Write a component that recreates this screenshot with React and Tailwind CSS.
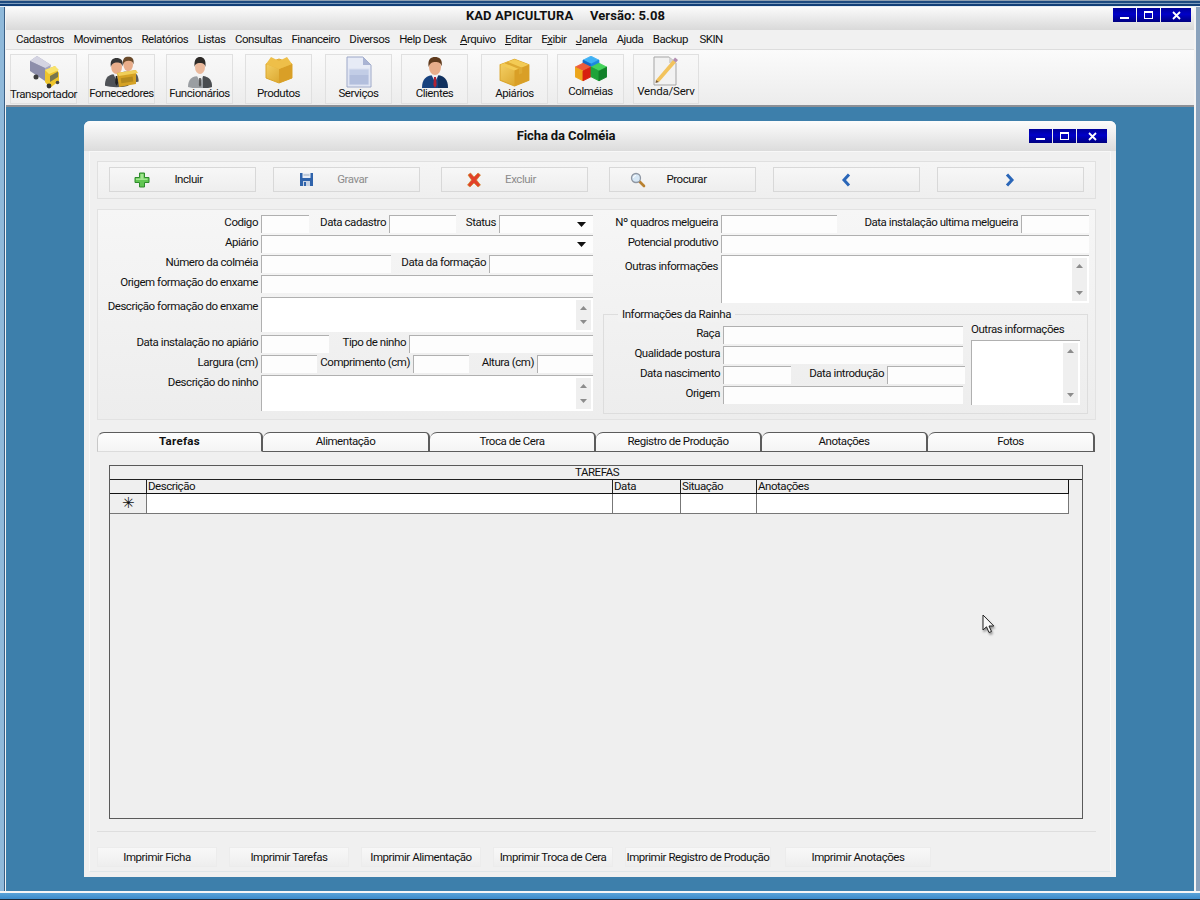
import React from "react";

const Cube = ({ x, y, s, top, left, right }) => (
  <g transform={`translate(${x} ${y}) scale(${s})`}>
    <polygon points="0,-10 9,-5.5 0,-1 -9,-5.5" fill={top} stroke={top} strokeWidth="1" strokeLinejoin="round" />
    <polygon points="-9,-5.5 0,-1 0,10 -9,5.5" fill={left} stroke={left} strokeWidth="1" strokeLinejoin="round" />
    <polygon points="9,-5.5 0,-1 0,10 9,5.5" fill={right} stroke={right} strokeWidth="1" strokeLinejoin="round" />
  </g>
);

const Truck = () => (
  <svg width="32" height="33" viewBox="0 0 32 33">
    <polygon points="9,0 23,9 20,21 2,13 2,5" fill="#a8a8c0" />
    <polygon points="9,0 23,9 17,12 2,5" fill="#d4d4e2" />
    <polygon points="2,5 17,12 17,25 2,15" fill="#8d8eab" />
    <polygon points="17,14 27,10 31,17 31,25 22,32 17,26" fill="#eec52c" />
    <polygon points="17,14 21,18 31,14 27,10" fill="#f8e36c" />
    <polygon points="22,20 30,15.500 30,21 22,26" fill="#77764f" />
    <circle cx="8" cy="21" r="2.500" fill="#3c3c3c" />
    <circle cx="21" cy="30" r="2.400" fill="#333" />
    <circle cx="29.500" cy="26.500" r="1.800" fill="#444" />
  </svg>
);

const Person = ({ suit, hair, tie, shirt = "#eef0f4" }) => (
  <>
    <path d="M1 32c0-9 4-13 13-13s13 4 13 13c-6 2-20 2-26 0z" fill={suit} />
    <path d="M17 19c6 1 10 4 10 13-3 1-6 1-10 1z" fill="#000" fillOpacity=".25" />
    <polygon points="10.500,19 14,26 17.500,19" fill={shirt} />
    <polygon points="13,21 15,21 15.600,29 14,32 12.400,29" fill={tie} />
    <ellipse cx="14" cy="11" rx="6" ry="8" fill="#e8ad8a" />
    <path d="M7.600 11C6.500 3 10 1 14 1s8 2 6.600 9.600C20 7 18 6 14.500 6 11 6 9 7 7.600 11z" fill={hair} />
  </>
);

const Suppliers = () => (
  <svg width="34" height="32" viewBox="0 0 34 32">
    <g transform="translate(-1 1) scale(.9)"><Person suit="#4f5257" hair="#353535" tie="#222" /></g>
    <g transform="translate(12 0) scale(.8)"><Person suit="#777a7e" hair="#6a4a2a" tie="#444" /></g>
    <polygon points="12,17 31,14 31,28 14,31" fill="#d5a226" />
    <polygon points="12,17 31,14 33,17 14,20" fill="#f0ce5a" />
    <rect x="16" y="21.500" width="12" height="5" fill="#b48a1f" transform="rotate(-8 21 24)" />
  </svg>
);

const Staff = () => (
  <svg width="28" height="32" viewBox="0 0 28 32">
    <path d="M2 31c0-8 4-11 12-11s12 3 12 11c-6 2-18 2-24 0z" fill="#9a9ea2" />
    <path d="M17 20c6 1 9 4 9 11-3 1-5 1-9 1z" fill="#4a4d50" />
    <polygon points="11,20 14,26 17,20" fill="#f1f1f1" />
    <polygon points="13.200,22 14.800,22 15.200,29 14,31 12.800,29" fill="#555" />
    <ellipse cx="14" cy="11" rx="5" ry="7" fill="#eab99c" />
    <path d="M8.600 11C7.800 3 11 1 14 1s6.400 2 5.400 10c-.6-3-2-4-5.400-4s-4.800 1-5.400 4z" fill="#2d2a27" />
  </svg>
);

const GoldBox = ({ id, w = 28, h = 28, tape }) => (
  <svg width={w} height={h} viewBox="0 0 28 28">
    <defs>
      <linearGradient id={id} x1="0" y1="0" x2="1" y2="1">
        <stop offset="0" stopColor="#f7d46a" />
        <stop offset="1" stopColor="#d39a1e" />
      </linearGradient>
    </defs>
    <path d="M1 8 14 3l13 5v14l-13 5-13-5z" fill={`url(#${id})`} stroke="#dba62c" strokeWidth="1" strokeLinejoin="round" />
    <path d="M1 8l13 5 13-5-13-5z" fill={tape ? "#f3cb55" : "#e6b23e"} />
    <path d="M14 13v14l13-5V8z" fill="#d99f27" />
    {tape ? (
      <path d="M8 5.300 21 10.500v5l-3 1.200v-5L5 6.500z" fill="#deaa33" />
    ) : (
      <path d="M1 8 6 1l8 4 8-4 5 7-13 5z" fill="#eebf49" />
    )}
  </svg>
);

const Doc = () => (
  <svg width="26" height="32" viewBox="0 0 26 32">
    <path d="M1 1h16l8 8v22H1z" fill="#e7ebf6" stroke="#9da8c8" />
    <path d="M17 1v8h8z" fill="#aab4d4" />
    <rect x="3" y="13" width="20" height="6" fill="#c2cde6" />
    <rect x="3" y="19" width="20" height="10" fill="#b3bfdd" />
    <rect x="3" y="13" width="20" height="16" fill="none" stroke="#d9dff0" />
  </svg>
);

const Cubes = () => (
  <svg width="32" height="26" viewBox="0 0 32 26">
    <Cube x={16} y={9} s={.88} top="#3fb0f4" left="#1369c7" right="#1d86df" />
    <Cube x={8} y={16} s={.88} top="#ef5b3a" left="#eca51a" right="#d8200f" />
    <Cube x={24} y={16} s={.88} top="#44d35a" left="#1ea339" right="#11802a" />
  </svg>
);

const PencilDoc = () => (
  <svg width="26" height="30" viewBox="0 0 26 30">
    <path d="M1 1h15l7 6v22H1z" fill="#f2f2f2" stroke="#a5a5a5" />
    <path d="M16 1v6h7z" fill="#d2d2d2" />
    <polygon points="3,24 20,4 23,6.500 6,26" fill="#f2c35d" />
    <polygon points="3,24 6,26 2.500,27" fill="#7b5a30" />
    <polygon points="20,4 22,1.500 25,4 23,6.500" fill="#b28cb0" />
  </svg>
);

const Plus = () => (
  <svg width="16" height="16" viewBox="0 0 16 16">
    <path d="M5.500 1h5v4.500H15v5h-4.500V15h-5v-4.500H1v-5h4.500z" fill="#62c653" stroke="#2f8a2c" strokeLinejoin="round" />
    <path d="M6.500 2h3v4.500h4V8H2V6.500h4.500z" fill="#a2e590" />
  </svg>
);
const Floppy = () => (
  <svg width="15" height="15" viewBox="0 0 15 15">
    <path d="M1 1h13v13H1z" fill="#2f63ab" />
    <rect x="3.500" y="1" width="8" height="5" fill="#e9edf5" />
    <rect x="4.500" y="2.500" width="6" height="1" fill="#99aabb" />
    <rect x="4" y="9" width="7" height="5" fill="#c7d2e4" />
    <rect x="5" y="10" width="2" height="4" fill="#2f63ab" />
  </svg>
);
const RedX = () => (
  <svg width="16" height="16" viewBox="0 0 16 16">
    <path d="M2 3 4.500 1 8 5l4-4 2.500 2-4 5 4 5-2.500 2L8 11l-4 4-2.500-2 4-5z" fill="#e2412a" stroke="#c9871f" strokeWidth=".6" />
  </svg>
);
const Search = () => (
  <svg width="16" height="16" viewBox="0 0 16 16">
    <path d="M9.500 9.500 14 14" stroke="#b9812f" strokeWidth="2.600" strokeLinecap="round" />
    <circle cx="6" cy="6" r="4.500" fill="#d6e7f5" stroke="#8f97a3" strokeWidth="1.300" />
    <path d="M3.500 6A2.500 2.500 0 0 1 6 3.500" stroke="#fff" fill="none" />
  </svg>
);
const Chev = ({ flip }) => (
  <svg width="11" height="14" viewBox="0 0 11 14" className={flip ? "scale-x-[-1]" : ""}>
    <path d="M8 1.500 3 7l5 5.500" fill="none" stroke="#2a66b8" strokeWidth="3" />
  </svg>
);

const WinBtns = () => {
  const cls = "h-[14px] flex items-center justify-center bg-[linear-gradient(#00009a,#0000c8_45%,#000080)]";
  return (
    <div className="flex gap-px">
      <div className={`w-[23px] items-end pb-[3px] ${cls}`}><div className="w-[9px] h-[2px] bg-white" /></div>
      <div className={`w-[23px] ${cls}`}><div className="w-[9px] h-[8px] border border-white border-t-[2px]" /></div>
      <div className={`w-[30px] ${cls}`}>
        <svg width="9" height="9" viewBox="0 0 9 9"><path d="M1 1l7 7M8 1 1 8" stroke="#fff" strokeWidth="1.800" /></svg>
      </div>
    </div>
  );
};

const menu = [
  ["Cadastros"], ["Movimentos"], ["Relatórios"], ["Listas"], ["Consultas"], ["Financeiro"], ["Diversos"], ["Help Desk", "", "", "mr-[4px]"],
  ["", "A", "rquivo"], ["", "E", "ditar"], ["E", "x", "ibir"], ["", "J", "anela"], ["Ajuda"], ["Backup"], ["SKIN", "", "", "ml-[2px]"],
];

const tools = [
  ["Transportador", <Truck />, "w-[67px] ml-[10px]", "mt-0"],
  ["Fornecedores", <Suppliers />, "w-[67px] ml-[11px]", "-mt-[1px]"],
  ["Funcionários", <Staff />, "w-[67px] ml-[11px]", "-mt-[1px]"],
  ["Produtos", <GoldBox id="g1" />, "w-[67px] ml-[12px]", "-mt-[1px]"],
  ["Serviços", <Doc />, "w-[67px] ml-[13px]", "-mt-[1px]"],
  ["Clientes", <svg width="28" height="32" viewBox="0 0 28 32"><Person suit="#17427f" hair="#5f3a1c" tie="#b22234" /></svg>, "w-[67px] ml-[9px]", "-mt-[1px]"],
  ["Apiários", <GoldBox id="g2" w={33} h={31} tape />, "w-[67px] ml-[13px]", "-mt-[1px]"],
  ["Colméias", <Cubes />, "w-[67px] ml-[9px]", "-mt-[3px]"],
  ["Venda/Serv", <PencilDoc />, "w-[66px] ml-[9px]", "-mt-[3px] tracking-[-0.2px]"],
];

const ActionBtn = ({ icon, text, dim, cls, iconCls = "w-[46px]" }) => (
  <button className={`${cls} w-[147px] h-[25px] flex items-center border border-[#d8d8d8] bg-[linear-gradient(#f7f7f7,#eeeeee)] ${dim ? "text-[#8c8c8c]" : "text-[#111]"}`}>
    <span className={`${iconCls} flex justify-end pr-[6px]`}>{icon}</span>
    <span className="flex-1 text-center pr-[34px]">{text}</span>
  </button>
);

const Inp = ({ cls = "flex-1" }) => <div className={`${cls} h-[18px] border-t border-l border-[#b0b0b0] bg-[#fdfdfd]`} />;
const Lab = ({ cls, children }) => <div className={`${cls} shrink-0 text-right leading-[15px] pr-[3px] whitespace-nowrap`}>{children}</div>;

const Arrow = ({ down }) => (
  <svg width="7" height="4" viewBox="0 0 7 4" className={down ? "rotate-180" : ""}><path d="M3.500 0 7 4H0z" fill="#8c8c8c" /></svg>
);
const ScrollBar = () => (
  <div className="w-[15px] flex flex-col items-center justify-between py-[6px] bg-[#efefef] my-[2px] mr-[2px]">
    <Arrow /><Arrow down />
  </div>
);
const Memo = ({ cls }) => (
  <div className={`${cls} flex justify-end border-t border-l border-[#b0b0b0] bg-white`}><ScrollBar /></div>
);
const Combo = ({ cls }) => (
  <div className={`${cls} h-[18px] border-t border-l border-[#b0b0b0] bg-[#fdfdfd] flex justify-end items-center pr-[7px]`}>
    <svg width="9" height="5" viewBox="0 0 9 5"><path d="M0 0h9L4.500 5z" fill="#111" /></svg>
  </div>
);
const Row = ({ cls = "h-[20px]", children }) => <div className={`flex ${cls}`}>{children}</div>;

const tabs = [
  ["Tarefas", "w-[166px]"],
  ["Alimentação", "w-[167px]"],
  ["Troca de Cera", "w-[166px]"],
  ["Registro de Produção", "w-[166px]"],
  ["Anotações", "w-[166px]"],
  ["Fotos", "w-[167px]"],
];
const prints = [
  ["Imprimir Ficha", "w-[120px] ml-0"],
  ["Imprimir Tarefas", "w-[120px] ml-[12px]"],
  ["Imprimir Alimentação", "w-[120px] ml-[12px]"],
  ["Imprimir Troca de Cera", "w-[120px] ml-[12px]"],
  ["Imprimir Registro de Produção", "w-[146px] ml-[12px]"],
  ["Imprimir Anotações", "w-[146px] ml-[14px]"],
];
const cols = [
  ["Descrição", "w-[466px]"],
  ["Data", "w-[68px]"],
  ["Situação", "w-[76px]"],
  ["Anotações", "w-[312px]"],
];

export default function App() {
  return (
    <div className="relative w-[1200px] h-[900px] overflow-hidden flex flex-col bg-[#3d7fab] text-[11.500px] text-[#111] font-['Roboto','Liberation_Sans',sans-serif] tracking-[-0.45px]">
      <div className="h-[7px] shrink-0 bg-[linear-gradient(#8fa0b2_0,#8fa0b2_1px,#1d4a80_1px,#1d4a80_3px,#7f9dbd_3px,#7f9dbd_4px,#123f78_4px,#123f78_6px,#e8eef4_6px)]" />
      <div className="flex-1 flex min-h-0">
        <div className="w-[6px] shrink-0 bg-[linear-gradient(90deg,#8fb9da,#8fb9da_4px,#3a5f85_4px,#3a5f85_5px,#f4f4f4_5px)]" />
        <div className="flex-1 flex flex-col min-w-0">
          <div className="h-[23px] shrink-0 flex bg-[linear-gradient(#fbfbfb,#d9d9d9)]">
            <div className="flex-1 flex justify-center">
              <div className="font-bold text-[13px] tracking-[0.1px] leading-[17px] ml-[12px] whitespace-pre">KAD APICULTURA     Versão: 5.08</div>
            </div>
            <div className="pt-[1px] pr-[3px]"><WinBtns /></div>
          </div>
          <div className="h-[20px] shrink-0 flex gap-[9.500px] pl-[10px] items-center bg-[#f1f1f1] border-b border-[#dddddd] tracking-[-0.5px]">
            {menu.map((m) => (
              <span key={m.join("")} className={`whitespace-nowrap ${m[3] || ""}`}>
                {m[0]}{m[1] && <span className="underline">{m[1]}</span>}{m[2]}
              </span>
            ))}
          </div>
          <div className="h-[57px] shrink-0 flex pt-[4px] bg-[linear-gradient(#fbfbfb,#ececec)] border-b-2 border-[#8d9096]">
            {tools.map(([t, ic, cls, up]) => (
              <div key={t} className={`${cls} -translate-x-[6px] h-[50px] border border-[#e0e0e0] bg-[linear-gradient(#f8f8f8,#efefef)] flex flex-col items-center shrink-0`}>
                <div className="h-[32px] flex items-start justify-center pt-[1px]">{ic}</div>
                <div className={`whitespace-nowrap leading-[14px] ${up}`}>{t}</div>
              </div>
            ))}
          </div>

          <div className="flex-1 min-h-0 pl-[78px] pt-[14px]">
            <div className="w-[1032px] h-[756px] rounded-tl-[6px] rounded-tr-[6px] flex flex-col bg-[#f0f0f0]">
              <div className="h-[30px] shrink-0 rounded-tl-[6px] rounded-tr-[6px] relative flex items-center justify-center pr-[68px] bg-[linear-gradient(#fcfcfc,#dcdcdc)]">
                <span className="font-bold text-[13px] tracking-[-0.1px]">Ficha da Colméia</span>
                <div className="absolute right-[9px] top-[8px]"><WinBtns /></div>
              </div>
              <div className="flex-1 mx-[5px] mb-[5px] pl-[7px] pr-[14px] pt-[9px] border border-[#f8f8f8] border-b-[#dfe6e8] bg-[#f0f0f0] flex flex-col">
                <div className="h-[38px] shrink-0 flex pl-[11px] pt-[5px] border border-[#e0e0e0] bg-[linear-gradient(#f5f5f5,#efefef)]">
                  <ActionBtn icon={<Plus />} text="Incluir" cls="" />
                  <ActionBtn icon={<Floppy />} text="Gravar" dim cls="ml-[17px]" />
                  <ActionBtn icon={<RedX />} text="Excluir" dim cls="ml-[21px]" />
                  <ActionBtn icon={<Search />} text="Procurar" cls="ml-[21px]" iconCls="w-[42px]" />
                  <button className="ml-[17px] w-[147px] h-[25px] flex items-center justify-center border border-[#d8d8d8] bg-[linear-gradient(#f7f7f7,#eeeeee)]"><Chev /></button>
                  <button className="ml-[17px] w-[147px] h-[25px] flex items-center justify-center pr-[2px] border border-[#d8d8d8] bg-[linear-gradient(#f7f7f7,#eeeeee)]"><Chev flip /></button>
                </div>

                <div className="mt-[10px] h-[211px] shrink-0 flex border border-[#e2e2e2] bg-[linear-gradient(#f6f6f6,#ededed)]">
                  <div className="w-[505px] shrink-0 pt-[5px]">
                    <Row>
                      <Lab cls="w-[163px]">Codigo</Lab><Inp cls="w-[48px]" />
                      <Lab cls="w-[80px]">Data cadastro</Lab><Inp cls="w-[67px]" />
                      <Lab cls="w-[43px]">Status</Lab><Combo cls="w-[94px]" />
                    </Row>
                    <Row><Lab cls="w-[163px]">Apiário</Lab><Combo cls="w-[332px]" /></Row>
                    <Row>
                      <Lab cls="w-[163px]">Número da colméia</Lab><Inp cls="w-[130px]" />
                      <Lab cls="w-[98px]">Data da formação</Lab><Inp cls="w-[104px]" />
                    </Row>
                    <Row cls="h-[22px]"><Lab cls="w-[163px]">Origem formação do enxame</Lab><Inp cls="w-[332px]" /></Row>
                    <Row cls="h-[38px]"><Lab cls="w-[163px] pt-[2px]">Descrição formação do enxame</Lab><Memo cls="w-[332px] h-[35px]" /></Row>
                    <Row>
                      <Lab cls="w-[163px]">Data instalação no apiário</Lab><Inp cls="w-[68px]" />
                      <Lab cls="w-[80px]">Tipo de ninho</Lab><Inp cls="w-[184px]" />
                    </Row>
                    <Row>
                      <Lab cls="w-[163px]">Largura (cm)</Lab><Inp cls="w-[56px]" />
                      <Lab cls="w-[96px]">Comprimento (cm)</Lab><Inp cls="w-[56px]" />
                      <Lab cls="w-[68px]">Altura (cm)</Lab><Inp cls="w-[56px]" />
                    </Row>
                    <Row cls="h-[37px]"><Lab cls="w-[163px]">Descrição do ninho</Lab><Memo cls="w-[332px] h-[36px]" /></Row>
                  </div>
                  <div className="w-[486px] shrink-0 pt-[5px]">
                    <Row>
                      <Lab cls="w-[118px]">Nº quadros melgueira</Lab><Inp cls="w-[116px]" />
                      <Lab cls="w-[184px]">Data instalação ultima melgueira</Lab><Inp cls="w-[68px]" />
                    </Row>
                    <Row><Lab cls="w-[118px]">Potencial produtivo</Lab><Inp cls="w-[368px]" /></Row>
                    <Row cls="h-[59px]"><Lab cls="w-[118px] pt-[4px]">Outras informações</Lab><Memo cls="w-[368px] h-[48px]" /></Row>
                    <div className="relative w-[485px] h-[100px] flex border border-[#dddddd]">
                      <div className="absolute left-[14px] -top-[8px] px-[4px] bg-[#f2f2f2] leading-[15px]">Informações da Rainha</div>
                      <div className="w-[367px] shrink-0 pt-[11px]">
                        <Row><Lab cls="w-[119px]">Raça</Lab><Inp cls="w-[240px]" /></Row>
                        <Row><Lab cls="w-[119px]">Qualidade postura</Lab><Inp cls="w-[240px]" /></Row>
                        <Row>
                          <Lab cls="w-[119px]">Data nascimento</Lab><Inp cls="w-[68px]" />
                          <Lab cls="w-[96px]">Data introdução</Lab><Inp cls="w-[78px]" />
                        </Row>
                        <Row><Lab cls="w-[119px]">Origem</Lab><Inp cls="w-[240px]" /></Row>
                      </div>
                      <div className="pt-[7px]">
                        <div className="leading-[15px] whitespace-nowrap h-[18px]">Outras informações</div>
                        <Memo cls="w-[109px] h-[65px]" />
                      </div>
                    </div>
                  </div>
                </div>

                <div className="mt-[12px] shrink-0 flex">
                  {tabs.map(([t, w], i) => (
                    <div key={t} className={`${w} h-[20px] flex items-center justify-center border-t border-r-2 rounded-tl-[7px] rounded-tr-[5px] border-[#5c5c5c] bg-[linear-gradient(#fdfdfd,#f4f4f4)] ${i === 0 ? "font-bold tracking-[0.3px] border-l border-l-[#c8c8c8] border-b border-b-[#dcdcdc]" : "border-b border-b-[#5c5c5c]"}`}>{t}</div>
                  ))}
                </div>

                <div className="h-[380px] shrink-0 pt-[13px] pl-[12px] border-b border-[#dedede]">
                  <div className="w-[974px] h-[354px] border border-[#5a5a5a] bg-[#efefef]">
                    <div className="h-[14px] text-center leading-[13px] border-b border-[#222] bg-[#f0f0f0] pl-[2px]">TAREFAS</div>
                    <div className="flex h-[14px] w-[959px] border-b border-r border-[#111]">
                      <div className="w-[36px] shrink-0" />
                      {cols.map(([c, w]) => (
                        <div key={c} className={`${w} shrink-0 border-l border-[#222] pl-[1px] leading-[13px]`}>{c}</div>
                      ))}
                    </div>
                    <div className="flex h-[20px] w-[959px] border-b border-r border-[#777] bg-white">
                      <div className="w-[36px] shrink-0 flex items-center justify-center bg-[#efefef] text-[15px] leading-none font-['DejaVu_Sans',sans-serif]">✳</div>
                      {cols.map(([c, w]) => (
                        <div key={c} className={`${w} shrink-0 border-l border-[#777]`} />
                      ))}
                    </div>
                  </div>
                </div>

                <div className="mt-[15px] shrink-0 flex">
                  {prints.map(([t, cls]) => (
                    <button key={t} className={`${cls} h-[20px] pt-[1px] shrink-0 text-center whitespace-nowrap bg-[linear-gradient(#f8f8f8,#eeeeee)] border border-[#ececec]`}>{t}</button>
                  ))}
                </div>
              </div>
            </div>
          </div>
        </div>
        <div className="w-[6px] shrink-0 bg-[linear-gradient(90deg,#f4f4f4,#f4f4f4_2px,#8aa2bc_2px)]" />
      </div>
      <div className="h-[9px] shrink-0 bg-[linear-gradient(#f6f6f6_0,#f6f6f6_2px,#5aa3d8_2px,#3c8bcb_8px,#1b2a3a_8px)]" />
      <svg width="14" height="20" viewBox="0 0 14 20" className="absolute left-[982px] top-[614px] drop-shadow-[1px_2px_1px_rgba(0,0,0,0.4)]">
        <path d="M1 1v15l3.500-3.200L7 18.500l2.500-1-2.500-5.500h4.800z" fill="#f8f8f8" stroke="#222" strokeWidth="1" strokeLinejoin="round" />
      </svg>
    </div>
  );
}
